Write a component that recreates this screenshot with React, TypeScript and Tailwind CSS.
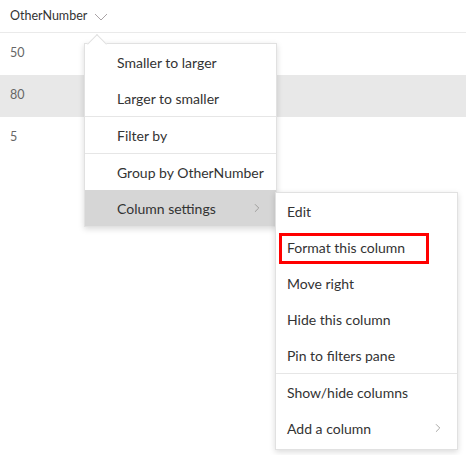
import { ChevronRight } from "lucide-react";

const rows = ["50", "80", "5"];

const MenuItem = ({
  label,
  active,
  sub,
  boxed,
}: {
  label: string;
  active?: boolean;
  sub?: boolean;
  boxed?: boolean;
}) => (
  <div
    className={`relative flex h-9 items-center pr-3 ${active ? "bg-[#d6d6d6]" : ""}`}
  >
    <span className="flex-1 whitespace-nowrap text-[14px] text-[#333333]">{label}</span>
    {sub && (
      <ChevronRight className="h-3.5 w-3.5 text-[#8a8886]" strokeWidth={1.25} />
    )}
    {boxed && (
      <div className="absolute left-[-8px] top-[4px] h-[31px] w-[150px] border-[3px] border-[#ff0000]" />
    )}
  </div>
);

const Sep = () => <div className="h-px bg-[#e6e6e6]" />;

export default function App() {
  return (
    <div
      className="relative h-[455px] w-[466px] overflow-hidden bg-white"
      style={{ fontFamily: 'Lato, "Open Sans", sans-serif' }}
    >
      {/* header */}
      <div className="flex h-[33px] items-center gap-[7px] border-b border-[#eaeaea] pl-2.5">
        <span className="text-[12.5px] text-[#333333]">OtherNumber</span>
        <svg width="14" height="8" viewBox="0 0 14 8" className="mt-px">
          <polyline points="1,1 7,7 13,1" fill="none" stroke="#a9a3a6" strokeWidth="1" />
        </svg>
      </div>

      {/* rows */}
      {rows.map((r, i) => (
        <div
          key={r}
          className={`flex h-[42px] items-center pb-0.5 pl-2.5 text-[12.5px] text-[#666666] ${i === 1 ? "bg-[#e8e8e8]" : ""}`}
        >
          {r}
        </div>
      ))}

      {/* main menu */}
      <div className="absolute left-[84px] top-[43px] w-[193px] border border-[#e1e1e1] bg-white pl-8 shadow-[0_2px_6px_rgba(0,0,0,0.15)]">
        {/* beak */}
        <div className="absolute left-[5px] top-[-7px] h-3.5 w-3.5 rotate-45 border-l border-t border-[#e1e1e1] bg-white" />
        <div className="relative">
          <MenuItem label="Smaller to larger" />
          <MenuItem label="Larger to smaller" />
        </div>
        <div className="-ml-8">
          <Sep />
        </div>
        <MenuItem label="Filter by" />
        <div className="-ml-8">
          <Sep />
        </div>
        <MenuItem label="Group by OtherNumber" />
        <div className="-ml-8 bg-[#d6d6d6] pl-8">
          <MenuItem label="Column settings" active sub />
        </div>
      </div>

      {/* submenu */}
      <div className="absolute left-[275px] top-[192px] w-[183px] border border-[#e1e1e1] bg-white pb-[3px] pl-[11px] shadow-[0_2px_6px_rgba(0,0,0,0.15)]">
        <MenuItem label="Edit" />
        <MenuItem label="Format this column" boxed />
        <MenuItem label="Move right" />
        <MenuItem label="Hide this column" />
        <MenuItem label="Pin to filters pane" />
        <div className="-ml-[11px]">
          <Sep />
        </div>
        <MenuItem label="Show/hide columns" />
        <MenuItem label="Add a column" sub />
      </div>
    </div>
  );
}
